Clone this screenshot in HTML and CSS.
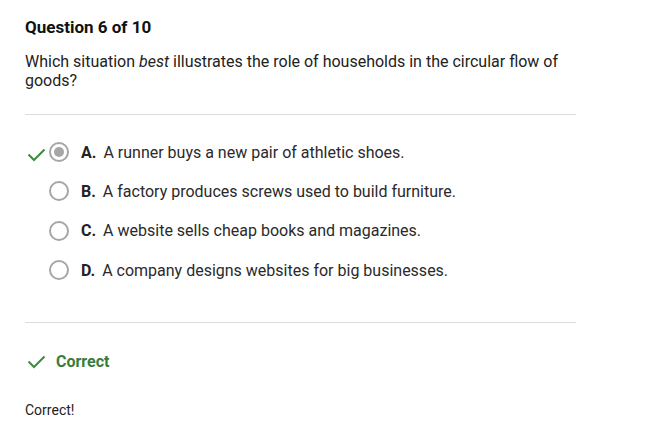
FILE: index.html
```html
<!DOCTYPE html>
<html>
<head>
<meta charset="utf-8">
<link rel="stylesheet" href="styles.css">
</head>
<body>
<div class="page">
  <h1 class="title">Question 6 of 10</h1>
  <p class="question">Which situation <em>best</em> illustrates the role of households in the circular flow of goods?</p>
  <hr class="divider">
  <ul class="options">
    <li class="option">
      <span class="mark"><svg width="19" height="16" viewBox="0 0 19 16"><path d="M1.5 8.5 L7 14 L17.5 3.5" fill="none" stroke="#3d8b3d" stroke-width="2"/></svg></span>
      <span class="radio selected"></span>
      <span class="letter">A.</span>
      <span class="text">A runner buys a new pair of athletic shoes.</span>
    </li>
    <li class="option">
      <span class="mark"></span>
      <span class="radio"></span>
      <span class="letter">B.</span>
      <span class="text">A factory produces screws used to build furniture.</span>
    </li>
    <li class="option">
      <span class="mark"></span>
      <span class="radio"></span>
      <span class="letter">C.</span>
      <span class="text">A website sells cheap books and magazines.</span>
    </li>
    <li class="option">
      <span class="mark"></span>
      <span class="radio"></span>
      <span class="letter">D.</span>
      <span class="text">A company designs websites for big businesses.</span>
    </li>
  </ul>
  <hr class="divider divider-bottom">
  <div class="result">
    <svg width="19" height="16" viewBox="0 0 19 16"><path d="M1.5 8.5 L7 14 L17.5 3.5" fill="none" stroke="#3d8b3d" stroke-width="2"/></svg>
    <span class="result-label">Correct</span>
  </div>
  <p class="feedback">Correct!</p>
</div>
</body>
</html>
```
FILE: styles.css
```css
html, body {
  margin: 0;
  padding: 0;
  background: #fff;
}
body {
  font-family: Roboto, "Liberation Sans", sans-serif;
  color: #222;
}
.page {
  padding: 16px 0 0 25px;
  width: 551px;
}
.title {
  margin: 0;
  font-size: 17px;
  font-weight: 700;
  line-height: 22px;
  color: #111;
}
.question {
  margin: 14px 0 0;
  font-size: 16px;
  line-height: 19px;
  color: #222;
}
.divider {
  border: 0;
  border-top: 1px solid #dcdcdc;
  margin: 24px 0 0;
  height: 0;
}
.options {
  list-style: none;
  margin: 27px 0 0;
  padding: 0;
  display: flex;
  flex-direction: column;
  gap: 19.4px;
}
.option {
  display: flex;
  align-items: center;
  height: 20px;
  font-size: 16px;
}
.mark {
  width: 24px;
  height: 20px;
  display: flex;
  align-items: flex-end;
  justify-content: flex-start;
  margin-left: 2px;
}
.radio {
  box-sizing: border-box;
  width: 20px;
  height: 20px;
  border-radius: 50%;
  border: 2px solid #a6a6a6;
  margin-left: -2px;
  display: flex;
  align-items: center;
  justify-content: center;
}
.radio.selected::after {
  content: "";
  width: 10px;
  height: 10px;
  border-radius: 50%;
  background: #a6a6a6;
}
.letter {
  font-weight: 700;
  margin-left: 12px;
  margin-right: 7px;
  color: #222;
}
.text {
  color: #2a2a2a;
}
.divider-bottom {
  margin-top: 42px;
}
.result {
  margin-top: 28px;
  display: flex;
  align-items: center;
  gap: 10px;
  padding-left: 2px;
  height: 20px;
}
.result-label {
  font-size: 16px;
  font-weight: 700;
  color: #3a7d3a;
}
.feedback {
  margin: 30px 0 0;
  font-size: 14px;
  line-height: 18px;
  color: #222;
}
```
